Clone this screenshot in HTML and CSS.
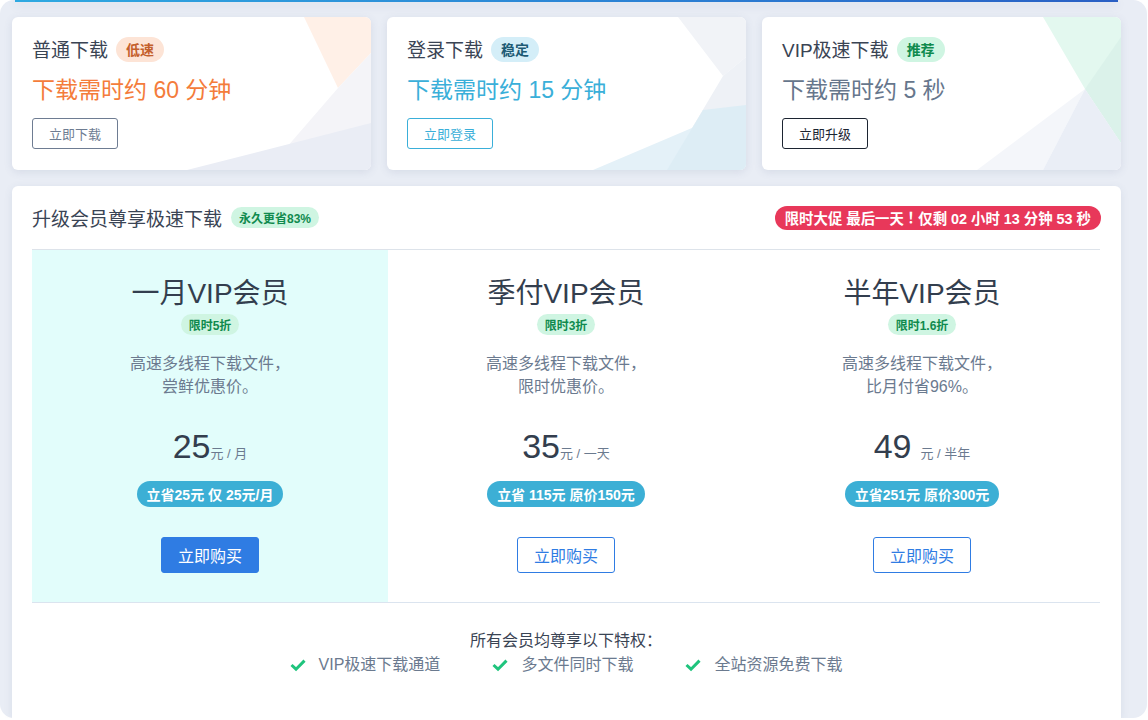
FILE: index.html
```html
<!DOCTYPE html>
<html lang="zh-CN">
<head>
<meta charset="utf-8">
<title>下载</title>
<link rel="stylesheet" href="styles.css">
</head>
<body>
<div class="wrap">
  <div class="topline"></div>

  <div class="dl-row">
    <div class="dl-card">
      <svg class="dl-deco" viewBox="0 0 359 153" preserveAspectRatio="none">
        <polygon points="292,0 359,0 359,36 326,71" fill="#fff0e7"/>
        <polygon points="326,71 359,36 359,153 255,153" fill="#f4f4f8"/>
        <polygon points="175,153 359,106 359,153" fill="#eaedf5"/>
      </svg>
      <div class="dl-head"><span class="dl-title">普通下载</span><span class="tag tag-orange">低速</span></div>
      <div class="dl-time t-orange">下载需时约 60 分钟</div>
      <button class="dl-btn b-gray">立即下载</button>
    </div>

    <div class="dl-card">
      <svg class="dl-deco" viewBox="0 0 359 153" preserveAspectRatio="none">
        <polygon points="291,0 359,0 359,40 336,59" fill="#f1f3f7"/>
        <polygon points="336,59 359,40 359,153 280,153" fill="#eef1f6"/>
        <polygon points="206,153 359,88 359,153" fill="#e4f1f8"/>
        <polygon points="280,153 316,93 359,88 359,153" fill="#ddedf5"/>
      </svg>
      <div class="dl-head"><span class="dl-title">登录下载</span><span class="tag tag-blue">稳定</span></div>
      <div class="dl-time t-blue">下载需时约 15 分钟</div>
      <button class="dl-btn b-blue">立即登录</button>
    </div>

    <div class="dl-card">
      <svg class="dl-deco" viewBox="0 0 359 153" preserveAspectRatio="none">
        <polygon points="281,0 359,0 359,126 323,72" fill="#e3f8ef"/>
        <polygon points="323,72 359,20 359,126" fill="#dbf2ea"/>
        <polygon points="215,153 323,72 281,153" fill="#f4f6fa"/>
        <polygon points="281,153 323,72 359,126 359,153" fill="#eaeef6"/>
      </svg>
      <div class="dl-head"><span class="dl-title">VIP极速下载</span><span class="tag tag-green">推荐</span></div>
      <div class="dl-time t-slate">下载需时约 5 秒</div>
      <button class="dl-btn b-dark">立即升级</button>
    </div>
  </div>

  <div class="vip-card">
    <div class="vip-head">
      <div class="vip-head-left">
        <span class="vip-title">升级会员尊享极速下载</span>
        <span class="tag tag-small tag-green">永久更省83%</span>
      </div>
      <span class="promo">限时大促 最后一天<span class="punct">！</span>仅剩 02 小时 13 分钟 53 秒</span>
    </div>

    <div class="plans">
      <div class="plan plan-active">
        <div class="plan-title">一月VIP会员</div>
        <span class="tag tag-small tag-green">限时5折</span>
        <div class="plan-desc">高速多线程下载文件，<br>尝鲜优惠价。</div>
        <div class="plan-price"><span class="num">25</span><span class="unit">元 / 月</span></div>
        <span class="save">立省25元 仅 25元/月</span>
        <button class="buy buy-solid">立即购买</button>
      </div>
      <div class="plan">
        <div class="plan-title">季付VIP会员</div>
        <span class="tag tag-small tag-green">限时3折</span>
        <div class="plan-desc">高速多线程下载文件，<br>限时优惠价。</div>
        <div class="plan-price"><span class="num">35</span><span class="unit">元 / 一天</span></div>
        <span class="save">立省 115元 原价150元</span>
        <button class="buy">立即购买</button>
      </div>
      <div class="plan">
        <div class="plan-title">半年VIP会员</div>
        <span class="tag tag-small tag-green">限时1.6折</span>
        <div class="plan-desc">高速多线程下载文件，<br>比月付省96%。</div>
        <div class="plan-price"><span class="num">49</span><span class="unit unit-gap">元 / 半年</span></div>
        <span class="save">立省251元 原价300元</span>
        <button class="buy">立即购买</button>
      </div>
    </div>

    <div class="perks">
      <div class="perks-title">所有会员均尊享以下特权<span class="punct">：</span></div>
      <ul class="perk-list">
        <li><svg class="check" viewBox="0 0 16 16"><path d="M1.5 8 L6 12.2 L14.5 3.6"/></svg>VIP极速下载通道</li>
        <li><svg class="check" viewBox="0 0 16 16"><path d="M1.5 8 L6 12.2 L14.5 3.6"/></svg>多文件同时下载</li>
        <li><svg class="check" viewBox="0 0 16 16"><path d="M1.5 8 L6 12.2 L14.5 3.6"/></svg>全站资源免费下载</li>
      </ul>
    </div>
  </div>
</div>
</body>
</html>
```

FILE: styles.css
```css
* { box-sizing: border-box; }

html, body {
  margin: 0;
  padding: 0;
  background: #ffffff;
}

body {
  font-family: "Liberation Sans", "Noto Sans CJK SC", sans-serif;
  color: #3a4454;
}

.punct {
  font-family: "Noto Sans CJK TC", "Noto Sans CJK SC", sans-serif;
  line-height: 1;
}

.wrap {
  width: 1147px;
  height: 718px;
  background: #e9edf5;
  border-radius: 14px;
  padding: 0 26px 0 12px;
  display: flex;
  flex-direction: column;
}

.topline {
  height: 2px;
  margin: 0 3px 15px 3px;
  background: linear-gradient(90deg, #2ea9e1, #2b7fd3 60%, #2a5fc4);
  box-shadow: 0 3px 10px rgba(60, 80, 130, 0.18);
}

/* ---------- top download cards ---------- */
.dl-row {
  display: flex;
  gap: 16px;
}

.dl-card {
  position: relative;
  flex: 1;
  height: 153px;
  background: #ffffff;
  border-radius: 6px;
  overflow: hidden;
  padding: 19px 20px 21px;
  box-shadow: 0 2px 8px rgba(70, 90, 130, 0.12);
}

.dl-deco {
  position: absolute;
  left: 0;
  top: 0;
  width: 100%;
  height: 100%;
}

.dl-head, .dl-time, .dl-btn {
  position: relative;
}

.dl-head {
  display: flex;
  align-items: center;
  gap: 8px;
  height: 26px;
}

.dl-title {
  font-size: 19px;
  color: #3a4454;
  margin-top: -2px;
}

.tag {
  display: inline-flex;
  align-items: center;
  justify-content: center;
  height: 25px;
  padding: 0 10px;
  border-radius: 13px;
  font-size: 14px;
  font-weight: bold;
  white-space: nowrap;
}

.tag-small {
  height: 21px;
  padding: 0 8px;
  border-radius: 11px;
  font-size: 12px;
}

.tag-orange { background: #fde4d6; color: #c4602c; }
.tag-blue { background: #d4eef8; color: #1d5a74; }
.tag-green { background: #cff5e2; color: #0f8a4e; }

.dl-time {
  margin-top: 12px;
  font-size: 23px;
  line-height: 32px;
}

.t-orange { color: #f47c3b; }
.t-blue { color: #3aafd9; }
.t-slate { color: #66768c; }

.dl-btn {
  display: block;
  margin-top: 12px;
  height: 31px;
  padding: 0 16px;
  background: #ffffff;
  border: 1px solid #6b7a90;
  border-radius: 3px;
  font-family: inherit;
  font-size: 13px;
  color: #6b7a90;
}

.b-gray { border-color: #6e7c92; color: #6e7c92; }
.b-blue { border-color: #3aafd9; color: #3aafd9; }
.b-dark { border-color: #1c2431; color: #1c2431; }

/* ---------- VIP card ---------- */
.vip-card {
  flex: 1;
  margin-top: 16px;
  background: #ffffff;
  border-radius: 6px 6px 0 0;
  padding: 0 21px 0 20px;
  box-shadow: 0 2px 8px rgba(70, 90, 130, 0.10);
}

.vip-head {
  height: 63px;
  display: flex;
  align-items: center;
  justify-content: space-between;
}

.vip-head-left {
  display: flex;
  align-items: center;
  gap: 9px;
}

.vip-title {
  font-size: 19px;
  color: #3a4454;
}

.promo {
  display: inline-flex;
  align-items: center;
  height: 24px;
  padding: 0 10px;
  border-radius: 12px;
  background: #e8385a;
  color: #ffffff;
  font-size: 14.4px;
  font-weight: bold;
  white-space: nowrap;
  margin-right: -1px;
}

.plans {
  display: grid;
  grid-template-columns: repeat(3, 1fr);
  border-top: 1px solid #dde3ea;
  border-bottom: 1px solid #dbe4ef;
}

.plan {
  display: flex;
  flex-direction: column;
  align-items: center;
  padding: 26px 0 29px;
  text-align: center;
}

.plan-active {
  background: #e2fdfb;
}

.plan-title {
  font-size: 28px;
  line-height: 36px;
  color: #333e4e;
}

.plan .tag-small {
  margin-top: 2px;
}

.plan-desc {
  margin-top: 17px;
  font-size: 16px;
  line-height: 23px;
  color: #6b7a8f;
}

.plan-price {
  margin-top: 28px;
  height: 40px;
  display: flex;
  align-items: baseline;
  justify-content: center;
  line-height: 40px;
}

.num {
  font-size: 34px;
  color: #333e4e;
}

.unit {
  font-size: 13px;
  color: #6b7a8f;
}

.unit-gap {
  margin-left: 9px;
}

.save {
  margin-top: 15px;
  display: inline-flex;
  align-items: center;
  height: 26px;
  padding: 0 10px;
  border-radius: 13px;
  background: #3cafd5;
  color: #ffffff;
  font-size: 14px;
  font-weight: bold;
  white-space: nowrap;
}

.buy {
  margin-top: 30px;
  width: 98px;
  height: 36px;
  border: 1px solid #2f7ce3;
  border-radius: 3px;
  background: #ffffff;
  color: #2f7ce3;
  font-family: inherit;
  font-size: 16px;
}

.buy-solid {
  background: #2f7ce3;
  color: #ffffff;
}

/* ---------- perks ---------- */
.perks {
  padding-top: 26px;
  text-align: center;
}

.perks-title {
  font-size: 16px;
  line-height: 24px;
  color: #3a4454;
}

.perk-list {
  list-style: none;
  margin: 0;
  padding: 0;
  display: flex;
  justify-content: center;
  gap: 52px;
}

.perk-list li {
  display: flex;
  align-items: center;
  gap: 13px;
  font-size: 16px;
  line-height: 24px;
  color: #6b7a8f;
}

.check {
  width: 16px;
  height: 16px;
  fill: none;
  stroke: #1fc47d;
  stroke-width: 3;
}
```
